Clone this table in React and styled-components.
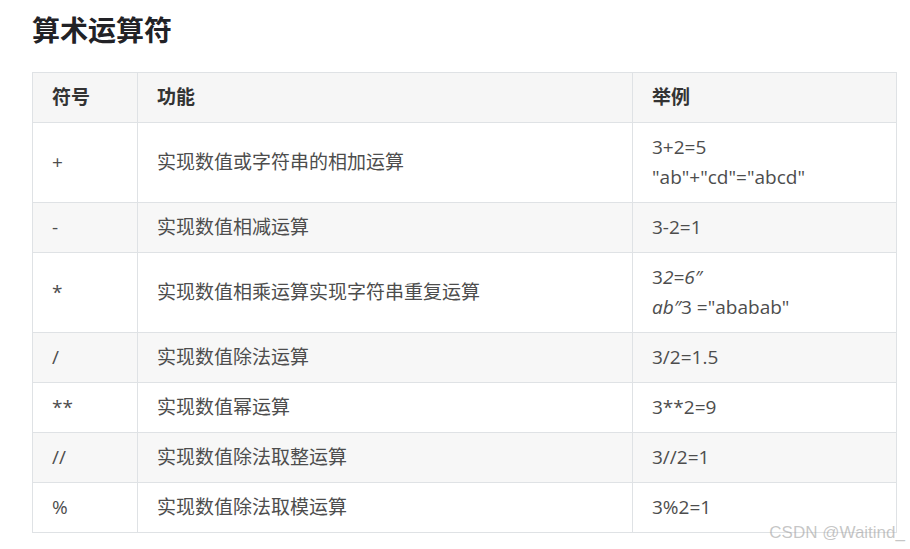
import React from "react";
import styled, { createGlobalStyle } from "styled-components";

const GlobalStyle = createGlobalStyle`
  html, body {
    margin: 0;
    padding: 0;
    background: #fff;
  }
`;

const Page = styled.div`
  position: relative;
  width: 910px;
  height: 549px;
  padding: 10px 14px 0 32px;
  box-sizing: border-box;
  font-family: "Open Sans", "Noto Sans CJK SC", sans-serif;
  color: #4d4d4d;
  overflow: hidden;
`;

const Title = styled.h1`
  margin: 0 0 22px;
  font-size: 28px;
  line-height: 40px;
  font-weight: 700;
  color: #222226;
`;

const Table = styled.table`
  width: 864px;
  border-collapse: collapse;
  table-layout: fixed;
  font-size: 19px;
  line-height: 30px;
`;

const Row = styled.tr`
  background: ${props => (props.striped ? "#f7f7f7" : "#fff")};
`;

const HeadRow = styled.tr`
  background: #f6f6f6;
`;

const Th = styled.th`
  box-sizing: border-box;
  width: ${props => props.w}px;
  padding: 9px 19px 10px;
  border: 1px solid #dfe2e5;
  text-align: left;
  font-weight: 700;
  color: #333;
`;

const Td = styled.td`
  padding: 9px 19px 10px;
  border: 1px solid #dfe2e5;
  vertical-align: middle;
`;

const Line = styled.div``;

const Watermark = styled.div`
  position: absolute;
  right: 5px;
  bottom: 6px;
  font-family: "Liberation Sans", sans-serif;
  font-size: 17px;
  color: rgba(160, 160, 160, 0.6);
`;

const rows = [
  { sym: "+", desc: "实现数值或字符串的相加运算", ex: [<Line key="a">3+2=5</Line>, <Line key="b">"ab"+"cd"="abcd"</Line>] },
  { sym: "-", desc: "实现数值相减运算", ex: "3-2=1" },
  {
    sym: "*",
    desc: "实现数值相乘运算实现字符串重复运算",
    ex: [
      <Line key="a">3<i>2=6″</i></Line>,
      <Line key="b"><i>ab″</i>3 ="ababab"</Line>,
    ],
  },
  { sym: "/", desc: "实现数值除法运算", ex: "3/2=1.5" },
  { sym: "**", desc: "实现数值幂运算", ex: "3**2=9" },
  { sym: "//", desc: "实现数值除法取整运算", ex: "3//2=1" },
  { sym: "%", desc: "实现数值除法取模运算", ex: "3%2=1" },
];

const App = () => (
  <Page>
    <GlobalStyle />
    <Title>算术运算符</Title>
    <Table>
      <thead>
        <HeadRow>
          <Th w={105}>符号</Th>
          <Th w={495}>功能</Th>
          <Th w={264}>举例</Th>
        </HeadRow>
      </thead>
      <tbody>
        {rows.map((r, i) => (
          <Row key={r.sym} striped={i % 2 === 1}>
            <Td>{r.sym}</Td>
            <Td>{r.desc}</Td>
            <Td>{r.ex}</Td>
          </Row>
        ))}
      </tbody>
    </Table>
    <Watermark>CSDN @Waitind_</Watermark>
  </Page>
);

export default App;
